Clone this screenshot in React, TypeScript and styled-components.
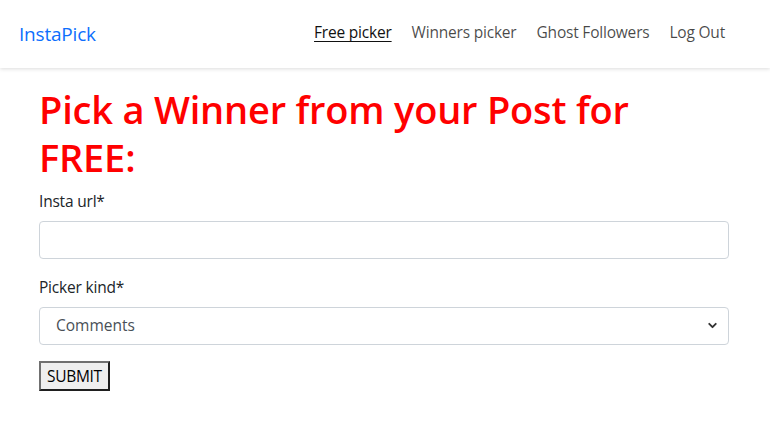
import React, { useState } from 'react';
import styled, { createGlobalStyle } from 'styled-components';
import { ChevronDown } from 'lucide-react';

const GlobalStyle = createGlobalStyle`
  * { box-sizing: border-box; }
  body {
    margin: 0;
    background: #fff;
    color: #212529;
    font-family: "Open Sans", "Noto Sans", "DejaVu Sans", sans-serif;
    font-size: 16px;
    line-height: 1.5;
  }
`;

const Navbar = styled.nav`
  height: 68px;
  display: flex;
  align-items: center;
  justify-content: space-between;
  padding: 0 45px 0 19px;
  background: #fff;
  box-shadow: 0 1px 4px rgba(0, 0, 0, 0.14);
`;

const Brand = styled.a`
  font-size: 19px;
  color: #0d6efd;
  text-decoration: none;
  letter-spacing: -0.2px;
`;

const NavList = styled.div`
  display: flex;
  gap: 20px;
  margin-top: -2px;
`;

const NavLink = styled.a<{ $active?: boolean }>`
  font-size: 15.5px;
  letter-spacing: -0.2px;
  color: ${(p) => (p.$active ? '#111' : 'rgba(0, 0, 0, 0.72)')};
  text-decoration: ${(p) => (p.$active ? 'underline' : 'none')};
  text-underline-offset: 3px;
  cursor: pointer;
`;

const Container = styled.main`
  width: 720px;
  margin: 0 auto;
  padding: 17px 16px 0 14px;
`;

const Title = styled.h1`
  margin: 0 0 8px;
  color: #ff0000;
  font-size: 38px;
  font-weight: 600;
  line-height: 48px;
  letter-spacing: -0.2px;
`;

const Form = styled.form`
  display: flex;
  flex-direction: column;
`;

const Group = styled.div`
  display: flex;
  flex-direction: column;
  margin-bottom: 16px;
`;

const Label = styled.label`
  font-size: 15.5px;
  letter-spacing: -0.2px;
  line-height: 24px;
  margin-bottom: 8px;
  color: #212529;
`;

const Input = styled.input`
  width: 100%;
  height: 38px;
  padding: 6px 12px;
  font: inherit;
  border: 1px solid #ced4da;
  border-radius: 4px;
  color: #495057;
  outline: none;
`;

const SelectWrap = styled.div`
  position: relative;
`;

const Select = styled.select`
  width: 100%;
  height: 38px;
  padding: 5px 36px 6px 16px;
  font: inherit;
  font-size: 15.5px;
  color: #495057;
  background: #fff;
  border: 1px solid #ced4da;
  border-radius: 4px;
  appearance: none;
  outline: none;
`;

const Arrow = styled.span`
  position: absolute;
  right: 10px;
  top: 12px;
  display: flex;
  color: #333;
  pointer-events: none;
`;

const SubmitButton = styled.button`
  align-self: flex-start;
  height: 30px;
  padding: 0 6px;
  font-family: "Open Sans", "Noto Sans", sans-serif;
  font-size: 15.5px;
  letter-spacing: -0.3px;
  color: #000;
  background: #efefef;
  border-style: solid;
  border-width: 2px;
  border-color: #707070 #1f1f1f #1f1f1f #707070;
  border-radius: 0;
  cursor: pointer;
`;

const App: React.FC = () => {
  const [url, setUrl] = useState('');
  const [kind, setKind] = useState('comments');

  return (
    <>
      <GlobalStyle />
      <Navbar>
        <Brand href="#">InstaPick</Brand>
        <NavList>
          <NavLink $active>Free picker</NavLink>
          <NavLink>Winners picker</NavLink>
          <NavLink>Ghost Followers</NavLink>
          <NavLink>Log Out</NavLink>
        </NavList>
      </Navbar>
      <Container>
        <Title>Pick a Winner from your Post for FREE:</Title>
        <Form onSubmit={(e) => e.preventDefault()}>
          <Group>
            <Label htmlFor="url">Insta url*</Label>
            <Input id="url" type="text" value={url} onChange={(e) => setUrl(e.target.value)} />
          </Group>
          <Group>
            <Label htmlFor="kind">Picker kind*</Label>
            <SelectWrap>
              <Select id="kind" value={kind} onChange={(e) => setKind(e.target.value)}>
                <option value="comments">Comments</option>
                <option value="likes">Likes</option>
              </Select>
              <Arrow>
                <ChevronDown size={13} strokeWidth={3.5} />
              </Arrow>
            </SelectWrap>
          </Group>
          <SubmitButton type="submit">SUBMIT</SubmitButton>
        </Form>
      </Container>
    </>
  );
};

export default App;
